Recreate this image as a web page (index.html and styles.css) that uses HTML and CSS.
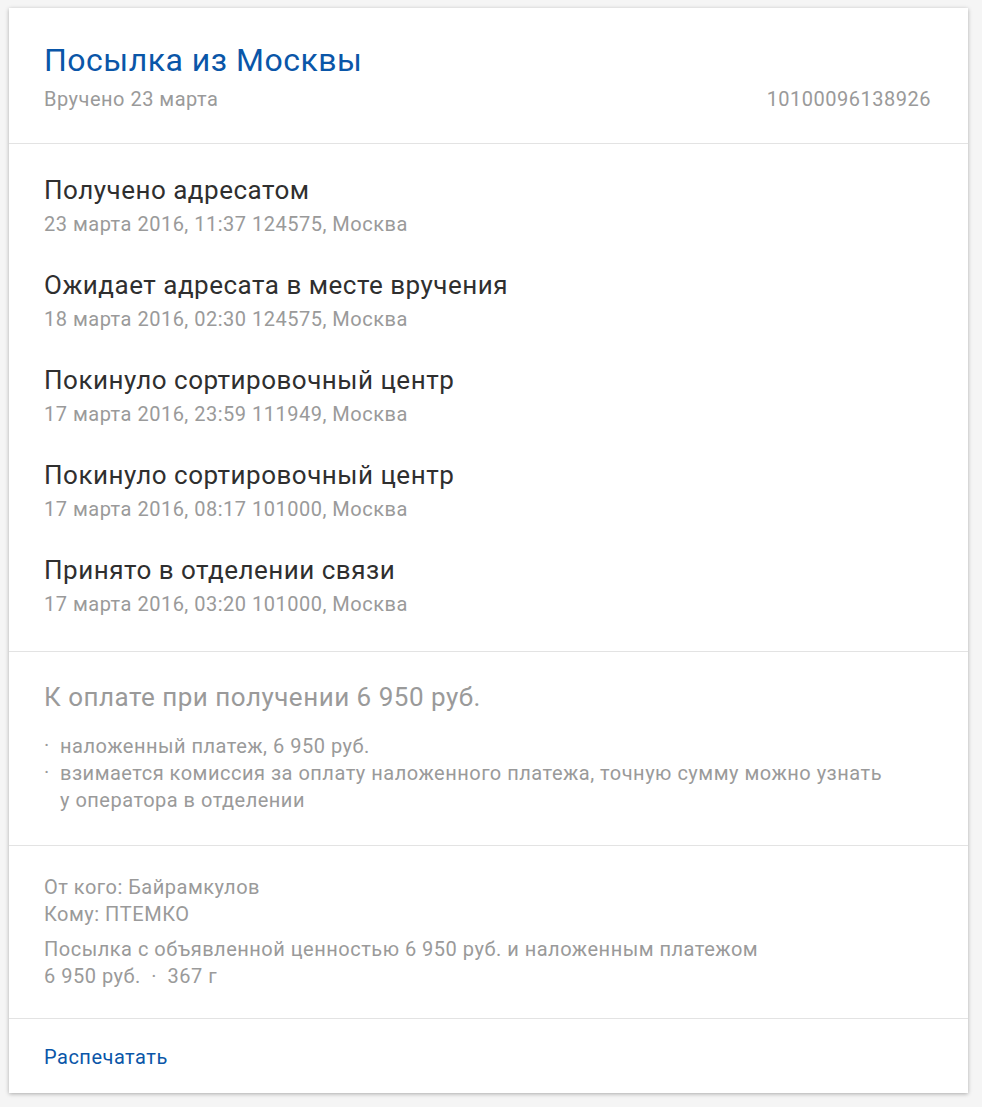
FILE: index.html
```html
<!DOCTYPE html>
<html lang="ru">
<head>
    <meta charset="UTF-8">
    <meta name="viewport" content="width=device-width, initial-scale=1.0">
    <title>Посылка из Москвы</title>
    <link rel="stylesheet" href="styles.css">
</head>
<body>
    <div class="card">
        <div class="section header">
            <h1 class="title">Посылка из Москвы</h1>
            <div class="header-row">
                <span>Вручено 23 марта</span>
                <span>10100096138926</span>
            </div>
        </div>

        <div class="section events">
            <div class="event">
                <div class="event-name">Получено адресатом</div>
                <div class="event-info">23 марта 2016, 11:37 124575, Москва</div>
            </div>
            <div class="event">
                <div class="event-name">Ожидает адресата в месте вручения</div>
                <div class="event-info">18 марта 2016, 02:30 124575, Москва</div>
            </div>
            <div class="event">
                <div class="event-name">Покинуло сортировочный центр</div>
                <div class="event-info">17 марта 2016, 23:59 111949, Москва</div>
            </div>
            <div class="event">
                <div class="event-name">Покинуло сортировочный центр</div>
                <div class="event-info">17 марта 2016, 08:17 101000, Москва</div>
            </div>
            <div class="event">
                <div class="event-name">Принято в отделении связи</div>
                <div class="event-info">17 марта 2016, 03:20 101000, Москва</div>
            </div>
        </div>

        <div class="section payment">
            <div class="payment-title">К оплате при получении 6 950 руб.</div>
            <ul class="payment-list">
                <li>наложенный платеж, 6 950 руб.</li>
                <li>взимается комиссия за оплату наложенного платежа, точную сумму можно узнать<br>у оператора в отделении</li>
            </ul>
        </div>

        <div class="section details">
            <p>От кого: Байрамкулов<br>Кому: ПТЕМКО</p>
            <p>Посылка с объявленной ценностью 6 950 руб. и наложенным платежом<br>6 950 руб. <span class="dot">·</span> 367 г</p>
        </div>

        <div class="section footer">
            <a href="#" class="link">Распечатать</a>
        </div>
    </div>
</body>
</html>
```

FILE: styles.css
```css
body {
    margin: 0;
    padding: 8px 14px 14px 9px;
    background: #f5f5f5;
    font-family: Roboto, 'Noto Sans', sans-serif;
    color: #333;
    letter-spacing: 0.5px;
}
.card {
    background: #fff;
    box-shadow: 0 1px 4px rgba(0, 0, 0, 0.3);
}
.section {
    padding: 0 37px 0 35px;
    border-bottom: 1px solid #e3e3e3;
}
.section:last-child {
    border-bottom: none;
}
.header {
    padding-top: 34px;
    padding-bottom: 32px;
}
.title {
    margin: 0 0 9px;
    font-size: 32px;
    line-height: 36px;
    font-weight: 400;
    color: #0a56a8;
}
.header-row {
    display: flex;
    justify-content: space-between;
    font-size: 20px;
    line-height: 24px;
    color: #9a9a9a;
}
.events {
    padding-top: 31px;
    padding-bottom: 35px;
}
.event + .event {
    margin-top: 34px;
}
.event-name {
    font-size: 26px;
    line-height: 30px;
    color: #2f2f2f;
}
.event-info {
    margin-top: 7px;
    font-size: 20px;
    line-height: 24px;
    color: #9a9a9a;
}
.payment {
    padding-top: 30px;
    padding-bottom: 31px;
}
.payment-title {
    font-size: 26px;
    line-height: 30px;
    color: #9a9a9a;
}
.payment-list {
    list-style: none;
    margin: 21px 0 0;
    padding: 0;
    font-size: 20px;
    line-height: 27px;
    color: #9a9a9a;
}
.payment-list li {
    position: relative;
    padding-left: 16px;
}
.payment-list li::before {
    content: "·";
    position: absolute;
    left: 0;
    top: -1px;
}
.details {
    padding-top: 28px;
    padding-bottom: 28px;
    font-size: 20px;
    line-height: 27px;
    color: #9a9a9a;
}
.details p {
    margin: 0;
}
.details p + p {
    margin-top: 8px;
}
.dot {
    margin: 0 5px;
}
.footer {
    padding-top: 26px;
    padding-bottom: 24px;
    font-size: 20px;
    line-height: 24px;
}
.link {
    color: #0a56a8;
    text-decoration: none;
}
```
